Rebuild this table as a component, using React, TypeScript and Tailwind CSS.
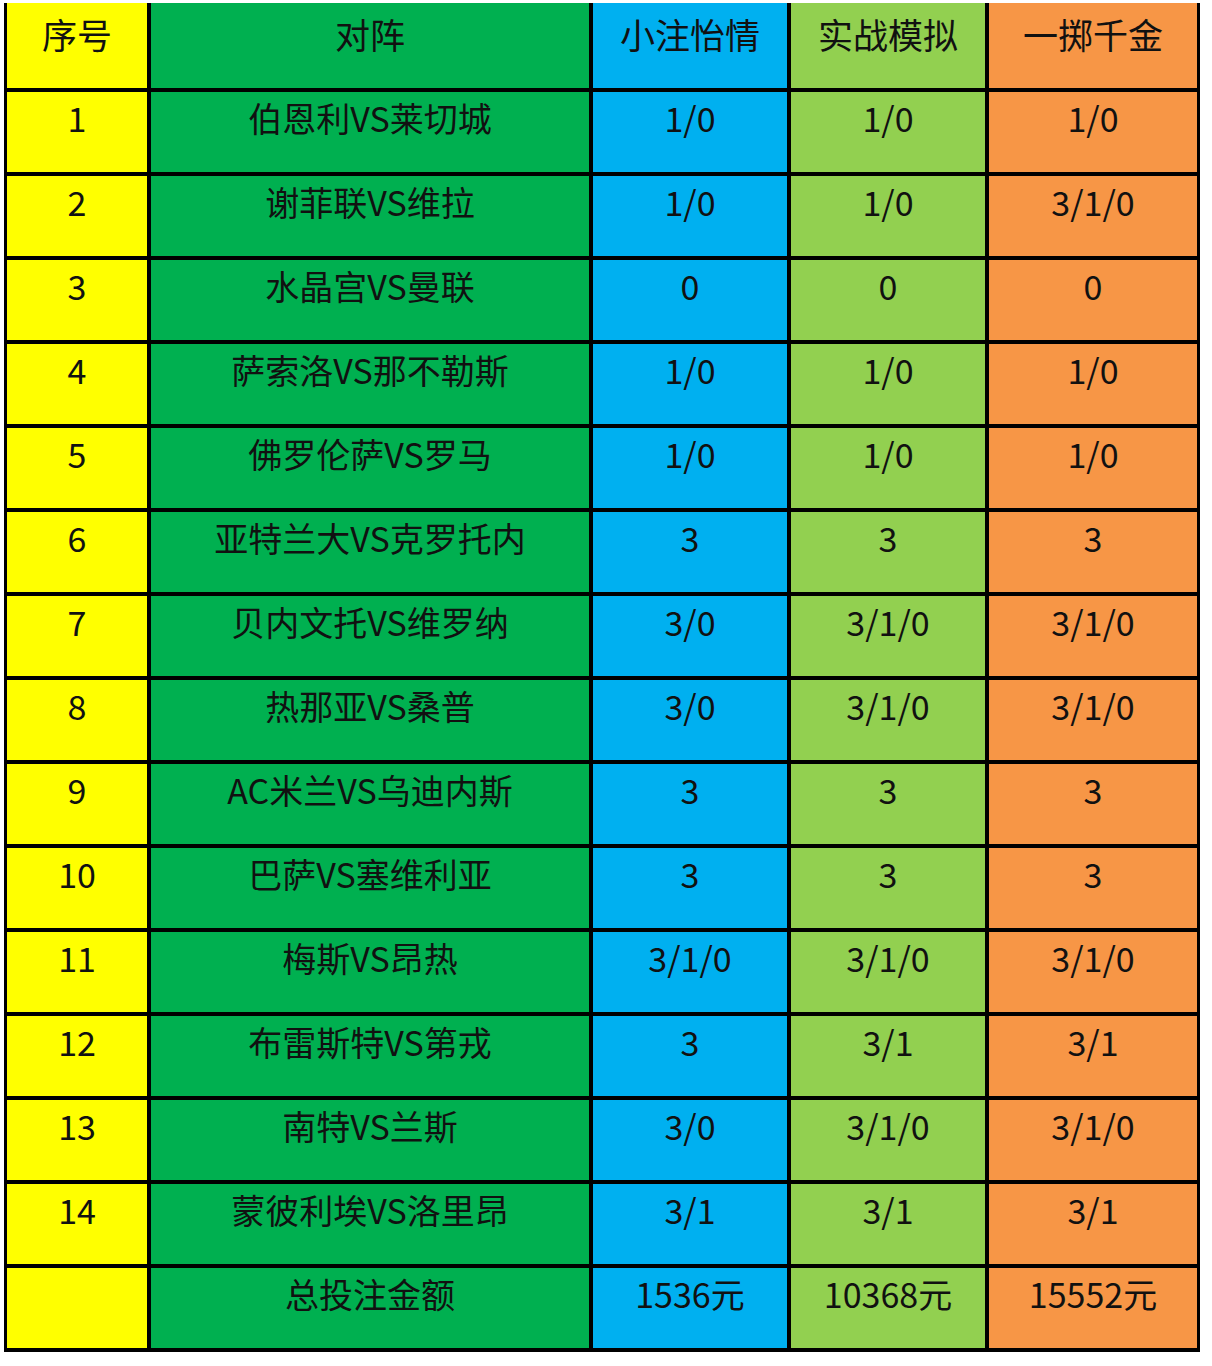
const header = ["序号", "对阵", "小注怡情", "实战模拟", "一掷千金"];

const rows: string[][] = [
  ["1", "伯恩利VS莱切城", "1/0", "1/0", "1/0"],
  ["2", "谢菲联VS维拉", "1/0", "1/0", "3/1/0"],
  ["3", "水晶宫VS曼联", "0", "0", "0"],
  ["4", "萨索洛VS那不勒斯", "1/0", "1/0", "1/0"],
  ["5", "佛罗伦萨VS罗马", "1/0", "1/0", "1/0"],
  ["6", "亚特兰大VS克罗托内", "3", "3", "3"],
  ["7", "贝内文托VS维罗纳", "3/0", "3/1/0", "3/1/0"],
  ["8", "热那亚VS桑普", "3/0", "3/1/0", "3/1/0"],
  ["9", "AC米兰VS乌迪内斯", "3", "3", "3"],
  ["10", "巴萨VS塞维利亚", "3", "3", "3"],
  ["11", "梅斯VS昂热", "3/1/0", "3/1/0", "3/1/0"],
  ["12", "布雷斯特VS第戎", "3", "3/1", "3/1"],
  ["13", "南特VS兰斯", "3/0", "3/1/0", "3/1/0"],
  ["14", "蒙彼利埃VS洛里昂", "3/1", "3/1", "3/1"],
  ["", "总投注金额", "1536元", "10368元", "15552元"],
];

const colBg = ["bg-[#ffff00]", "bg-[#00b050]", "bg-[#00b0f0]", "bg-[#92d050]", "bg-[#f79646]"];

export default function App() {
  return (
    <div className="min-h-[1366px] w-[1212px] bg-white pt-[3px] pl-[4px] font-['Noto_Sans_CJK_SC','Noto_Sans',sans-serif] text-[#111]">
      <div className="grid w-[1196px] grid-cols-[140px_438px_194px_194px_208px] gap-[4px] bg-black px-[3px] pb-[4px]">
        {header.map((h, i) => (
          <div key={h} className={`${colBg[i]} h-[85px] pt-[11px] text-center text-[35px] leading-[40px]`}>
            {h}
          </div>
        ))}
        {rows.map((r, ri) =>
          r.map((c, ci) => (
            <div
              key={`${ri}-${ci}`}
              className={`${colBg[ci]} h-[80px] pt-[6px] text-center text-[34px] leading-[40px]`}
            >
              {c}
            </div>
          ))
        )}
      </div>
    </div>
  );
}
